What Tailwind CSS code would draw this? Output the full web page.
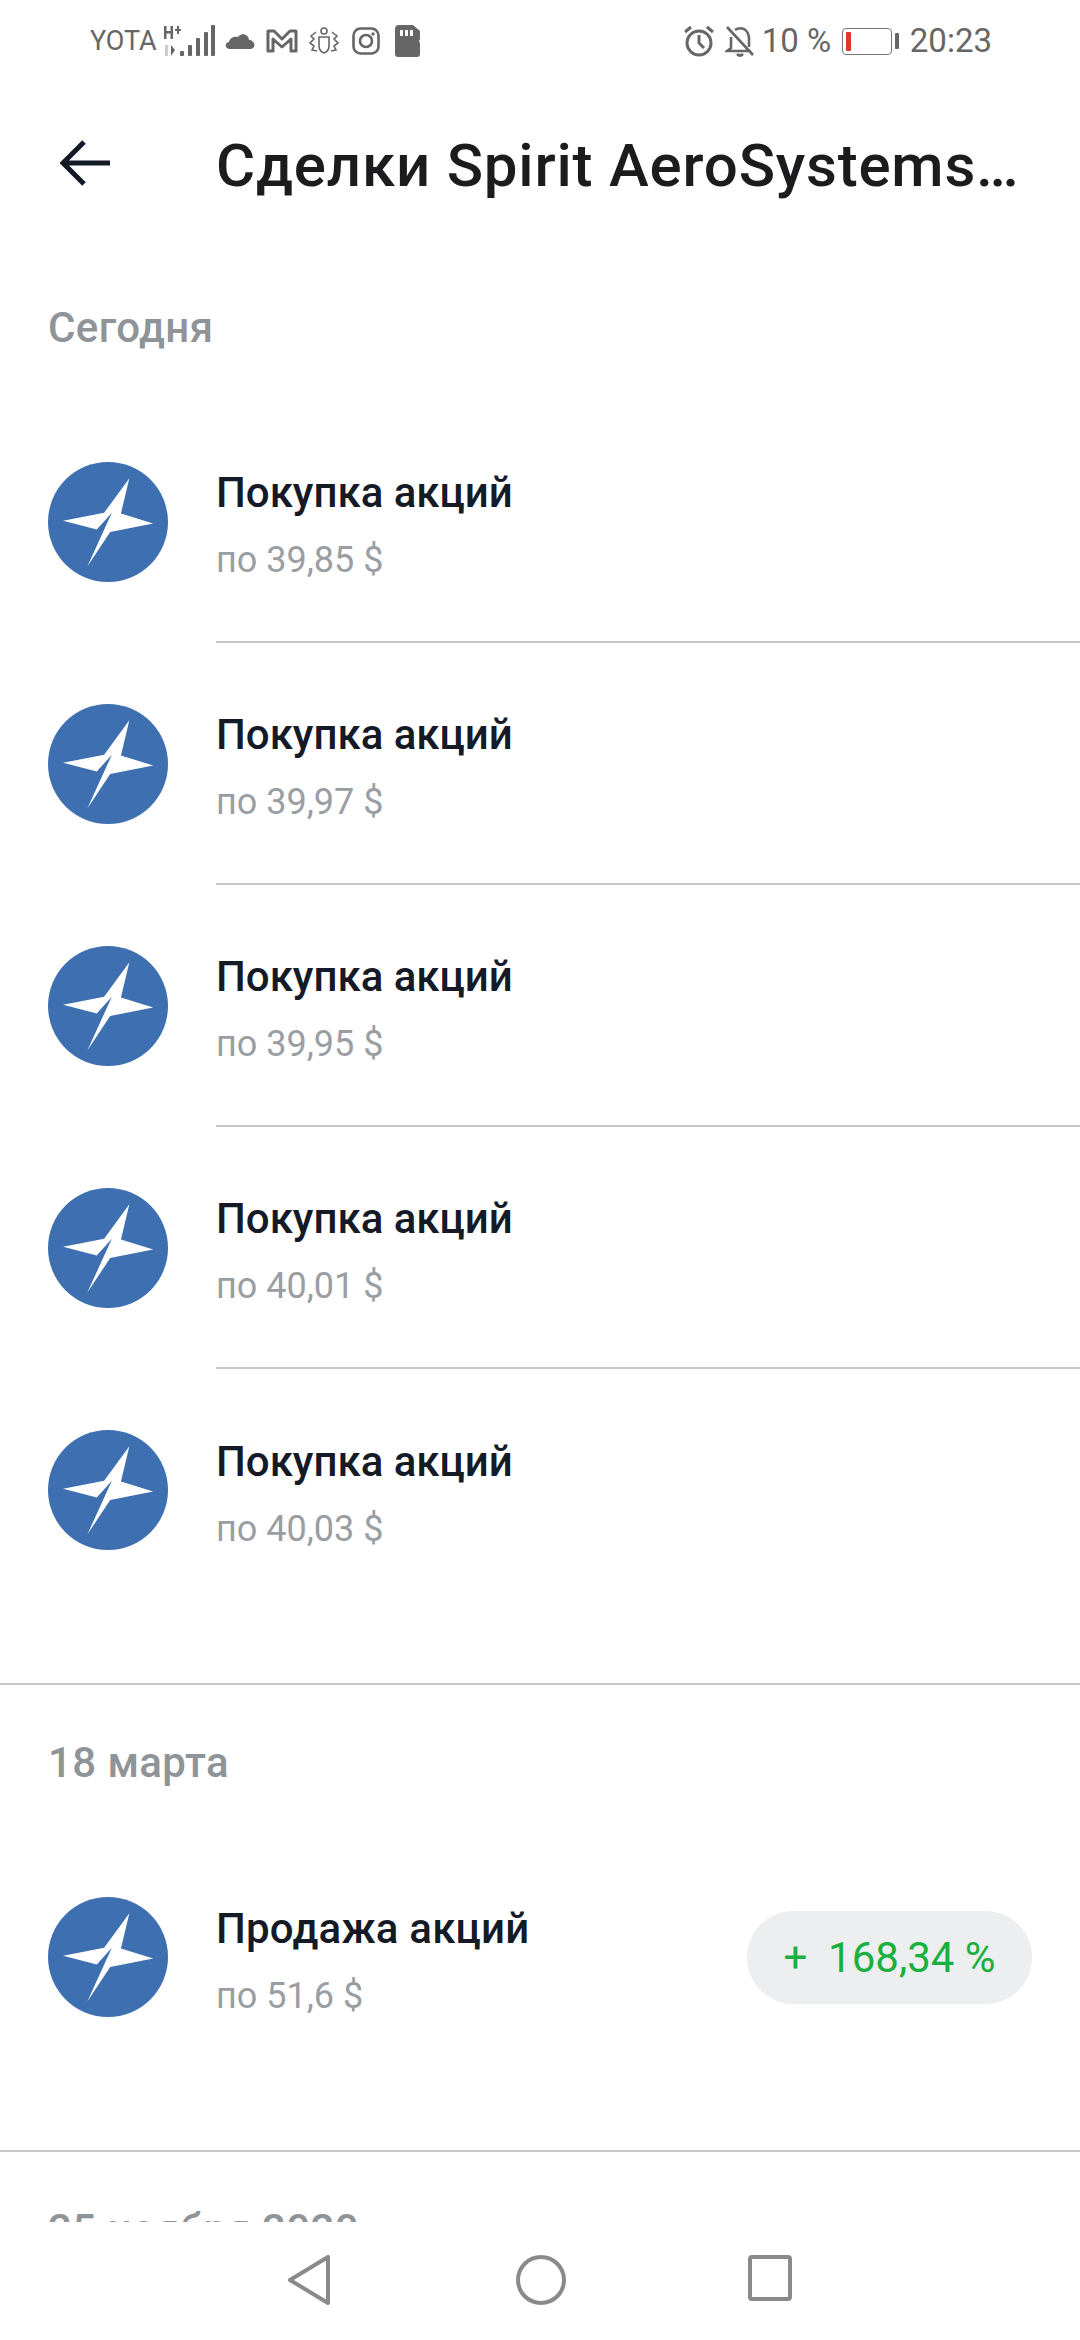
<!DOCTYPE html>
<html lang="ru">
<head>
  <meta charset="UTF-8" />
  <meta name="viewport" content="width=device-width, initial-scale=1.0" />
  <title>Сделки</title>
  <script src="https://cdn.jsdelivr.net/npm/@tailwindcss/browser@4"></script>
</head>
<body class="bg-white font-['Roboto',sans-serif] text-[#141a26]">
  <svg class="hidden">
    <symbol id="logo" viewBox="55 67 357 357">
      <circle cx="233.5" cy="245.5" r="178.5" fill="#3e6fb0" />
      <path d="M297 115 L272 220 L368 250 L240 275 L172 378 L245 218 L200 268 L100 242 L222 218 Z" fill="#fff" />
    </symbol>
  </svg>

  <div class="h-[2340px] w-[1080px] flex flex-col overflow-hidden">
    <!-- Status bar -->
    <div class="h-[80px] shrink-0 pl-[90px] pr-[88px] flex items-center justify-between text-[#666] pt-[2px]">
      <div class="flex items-center">
        <span class="text-[27px] w-[73px]">YOTA</span>
        <svg class="w-[52px] h-[32px]" viewBox="0 0 52 32" fill="#666">
          <path d="M1 1 H3.5 V6 H7.5 V1 H10 V14 H7.5 V8.5 H3.5 V14 H1 Z M12 4 H14 V1 H16 V4 H18 V6 H16 V9 H14 V6 H12 Z" />
          <rect x="2" y="20" width="3" height="11" fill="#ccc" />
          <path d="M8 20 L12 25 L8 31 Z" />
          <rect x="17" y="26" width="4" height="5" rx="1" />
          <rect x="25" y="20" width="4" height="11" rx="1" />
          <rect x="33" y="13" width="4" height="18" rx="1" />
          <rect x="41" y="7" width="4" height="24" rx="1" />
          <rect x="48" y="0" width="4" height="31" rx="1" />
        </svg>
        <svg class="w-[32px] h-[20px] ml-[9px]" viewBox="0 0 32 20" fill="#666"><path d="M6 18 C1 18 0 12 5 11 C6 6 11 5 14 6 C17 1 25 3 25 9 C31 9 33 18 26 18 Z" /></svg>
        <svg class="w-[32px] h-[26px] ml-[10px]" viewBox="0 0 32 26" fill="none" stroke="#666" stroke-width="3" stroke-linejoin="round"><path d="M2 3 H8 L16 11 L24 3 H30 V23 H25 V11 L16 19 L7 11 V23 H2 Z" /></svg>
        <svg class="w-[32px] h-[30px] ml-[10px]" viewBox="0 0 32 30" fill="none" stroke="#666" stroke-width="1.6"><path d="M11 11 H21 V20 Q21 25 16 27 Q11 25 11 20 Z" /><circle cx="16" cy="5" r="3" /><path d="M8 6 L3 10 L6 13 L2 17 L6 20 L4 24 L9 25 M24 6 L29 10 L26 13 L30 17 L26 20 L28 24 L23 25" /></svg>
        <svg class="w-[28px] h-[28px] ml-[12px]" viewBox="0 0 28 28" fill="none" stroke="#666" stroke-width="2.6"><rect x="1.5" y="1.5" width="25" height="25" rx="7" /><circle cx="14" cy="14" r="6" /><circle cx="21" cy="7" r="1.2" fill="#666" stroke-width="1" /></svg>
        <svg class="w-[26px] h-[32px] ml-[15px]" viewBox="0 0 26 32" fill="#666"><path fill-rule="evenodd" d="M4 0 H18 L25 6 V14 L24 16 L25 18 V29 Q25 32 22 32 H3 Q0 32 0 29 V4 Q0 0 4 0 Z M5 5 V11 H8 V5 Z M10 5 V11 H13 V5 Z M15 5 V11 H18 V5 Z" /></svg>
      </div>
      <div class="flex items-center">
        <svg class="w-[32px] h-[32px]" viewBox="0 0 32 32" fill="none" stroke="#666" stroke-width="3"><circle cx="16" cy="18" r="12" /><path d="M16 10 V18 L21 23 M2 7 L8 2 M30 7 L24 2" /></svg>
        <svg class="w-[30px] h-[32px] ml-[10px]" viewBox="0 0 30 32" fill="none" stroke="#666" stroke-width="2.6"><path d="M6 12 V23 L2 26 H26 M10 5 Q14 2 19 4 Q24 7 24 14 V22 M2 2 L28 30" /><path d="M12 29 Q15 32 18 29" /></svg>
        <span class="text-[33px] ml-[7px] w-[80px]">10 %</span>
        <div class="w-[50px] h-[27px] border-[1.5px] border-[#777] rounded-[4px] p-[3px] bg-white">
          <div class="w-[5px] h-full bg-[#e5352b] rounded-[1px]"></div>
        </div>
        <div class="w-[4px] h-[16px] bg-[#666] ml-[3px] rounded-[1px]"></div>
        <span class="text-[33px] ml-[11px]">20:23</span>
      </div>
    </div>

    <!-- Header -->
    <div class="h-[88px] mt-[42px] shrink-0 flex items-center pl-[60px]">
      <svg class="w-[50px] h-[48px] mb-[6px]" viewBox="0 0 50 48" fill="none" stroke="#141a26" stroke-width="5"><path d="M50 24 H4 M24 3 L3 24 L24 45" /></svg>
      <h1 class="ml-[106px] whitespace-nowrap text-[60px] leading-[88px] font-medium text-[#1c1c1e] tracking-[0.8px]">Сделки Spirit AeroSystems…</h1>
    </div>

    <!-- Deals -->
    <div class="flex-1 overflow-hidden">
      <h2 class="mt-[92px] pl-[48px] text-[42px] leading-[52px] font-medium text-[#8f9499] tracking-[0.4px]">Сегодня</h2>
      <div class="mt-[47px]">
        <div class="h-[242px] flex items-center pl-[48px]">
          <svg class="w-[120px] h-[120px] shrink-0"><use href="#logo" /></svg>
          <div class="ml-[48px] pt-[7px] flex-1 h-full border-b-2 border-[#c8c8c8] flex flex-col justify-center">
            <div class="text-[42px] leading-[50px] font-medium">Покупка акций</div>
            <div class="mt-[20px] text-[36px] leading-[44px] text-[#9a9ea3]">по 39,85 $</div>
          </div>
        </div>
        <div class="h-[242px] flex items-center pl-[48px]">
          <svg class="w-[120px] h-[120px] shrink-0"><use href="#logo" /></svg>
          <div class="ml-[48px] pt-[7px] flex-1 h-full border-b-2 border-[#c8c8c8] flex flex-col justify-center">
            <div class="text-[42px] leading-[50px] font-medium">Покупка акций</div>
            <div class="mt-[20px] text-[36px] leading-[44px] text-[#9a9ea3]">по 39,97 $</div>
          </div>
        </div>
        <div class="h-[242px] flex items-center pl-[48px]">
          <svg class="w-[120px] h-[120px] shrink-0"><use href="#logo" /></svg>
          <div class="ml-[48px] pt-[7px] flex-1 h-full border-b-2 border-[#c8c8c8] flex flex-col justify-center">
            <div class="text-[42px] leading-[50px] font-medium">Покупка акций</div>
            <div class="mt-[20px] text-[36px] leading-[44px] text-[#9a9ea3]">по 39,95 $</div>
          </div>
        </div>
        <div class="h-[242px] flex items-center pl-[48px]">
          <svg class="w-[120px] h-[120px] shrink-0"><use href="#logo" /></svg>
          <div class="ml-[48px] pt-[7px] flex-1 h-full border-b-2 border-[#c8c8c8] flex flex-col justify-center">
            <div class="text-[42px] leading-[50px] font-medium">Покупка акций</div>
            <div class="mt-[20px] text-[36px] leading-[44px] text-[#9a9ea3]">по 40,01 $</div>
          </div>
        </div>
        <div class="h-[242px] flex items-center pl-[48px]">
          <svg class="w-[120px] h-[120px] shrink-0"><use href="#logo" /></svg>
          <div class="ml-[48px] pt-[7px] flex-1 h-full flex flex-col justify-center">
            <div class="text-[42px] leading-[50px] font-medium">Покупка акций</div>
            <div class="mt-[20px] text-[36px] leading-[44px] text-[#9a9ea3]">по 40,03 $</div>
          </div>
        </div>
      </div>

      <div class="mt-[72px] border-t-2 border-[#c8c8c8]">
        <h2 class="mt-[52px] pl-[48px] text-[42px] leading-[52px] font-medium text-[#8f9499] tracking-[0.4px]">18 марта</h2>
        <div class="mt-[47px] h-[242px] flex items-center pl-[48px] pr-[48px]">
          <svg class="w-[120px] h-[120px] shrink-0"><use href="#logo" /></svg>
          <div class="ml-[48px] pt-[7px] flex-1 flex flex-col justify-center">
            <div class="text-[42px] leading-[50px] font-medium tracking-[0.2px]">Продажа акций</div>
            <div class="mt-[20px] text-[36px] leading-[44px] text-[#9a9ea3]">по 51,6 $</div>
          </div>
          <div class="w-[285px] h-[93px] rounded-full bg-[#eceeef] flex items-center justify-center text-[42px] text-[#1ab03f]">+&nbsp; 168,34 %</div>
        </div>
      </div>

      <div class="mt-[72px] border-t-2 border-[#c8c8c8]">
        <h2 class="mt-[52px] pl-[48px] text-[42px] leading-[52px] font-medium text-[#8f9499] tracking-[0.4px]">25 ноября 2020</h2>
      </div>
    </div>

    <!-- Android nav -->
    <div class="h-[118px] shrink-0 bg-white flex items-start justify-center pt-[33px] gap-[182px]">
      <svg class="w-[42px] h-[50px] mr-[4px]" viewBox="0 0 42 50" fill="none" stroke="#8a8a8a" stroke-width="4" stroke-linejoin="round"><path d="M40 2 V48 L2 25 Z" /></svg>
      <svg class="w-[50px] h-[50px]" viewBox="0 0 50 50" fill="none" stroke="#8a8a8a" stroke-width="4"><circle cx="25" cy="25" r="23" /></svg>
      <svg class="w-[44px] h-[46px]" viewBox="0 0 44 46" fill="none" stroke="#8a8a8a" stroke-width="4"><rect x="2" y="2" width="40" height="42" rx="2" /></svg>
    </div>
  </div>
</body>
</html>
